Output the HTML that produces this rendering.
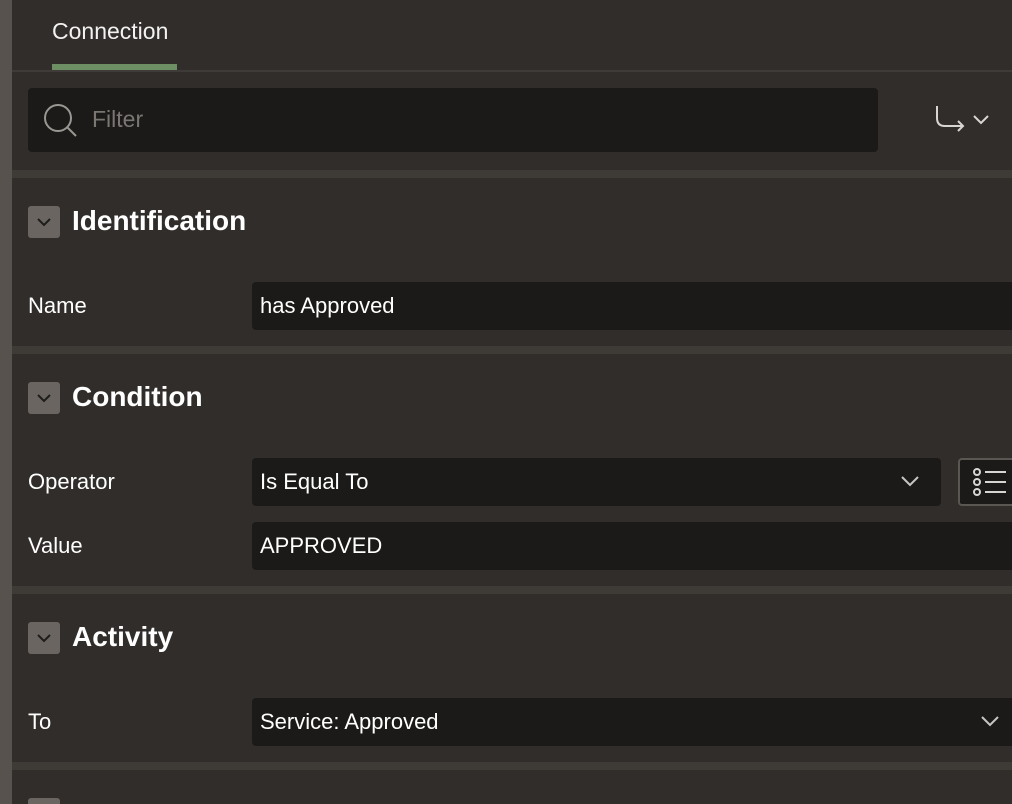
<!DOCTYPE html>
<html style="overflow:hidden;width:1012px;height:804px"><head><style>
*{margin:0;padding:0;box-sizing:border-box}
body{width:1012px;height:804px;overflow:hidden;background:#312d2a;font-family:"Liberation Sans",sans-serif;color:#fff;position:relative}
.a{position:absolute}
.strip{left:0;top:0;width:12px;height:804px;background:#57524d}
.sep{left:12px;width:1000px;height:8px;background:#3e3a36}
.tog{left:28px;width:32px;height:32px;background:#6a6560;border-radius:3px}
.tog svg{position:absolute;left:8px;top:10px}
.h{left:72px;font-size:28px;font-weight:bold}
.lbl{left:28px;font-size:22px}
.inp{background:#1b1a18;border-radius:4px;font-size:22px;padding-left:8px;line-height:48px;height:48px}
</style></head><body>
<div class="a strip"></div>
<div class="a" style="left:52px;top:18px;font-size:23px;color:#f2f2f2">Connection</div>
<div class="a" style="left:52px;top:64px;width:125px;height:6px;background:#6e8e63"></div>
<div class="a" style="left:12px;top:70px;width:1000px;height:2px;background:#3f3b38"></div>
<div class="a" style="left:28px;top:88px;width:850px;height:64px;background:#1b1a18;border-radius:4px"></div>
<svg class="a" style="left:42px;top:102px" width="36" height="36" viewBox="0 0 36 36" fill="none" stroke="#9a9793" stroke-width="2"><circle cx="16" cy="16" r="13"/><line x1="25" y1="25" x2="34" y2="34"/></svg>
<div class="a" style="left:92px;top:106px;font-size:23px;color:#7a7672">Filter</div>
<svg class="a" style="left:932px;top:104px" width="64" height="34" viewBox="0 0 64 34" fill="none" stroke="#d8d6d3" stroke-width="2"><path d="M5 2 V14 Q5 22 13 22 H31 M26 17 L31 22 L26 27"/><path d="M42 12 L49 19 L56 12"/></svg>
<div class="a sep" style="top:170px"></div>
<div class="a tog" style="top:206px"><svg width="16" height="12"><path d="M2 3 L8 9 L14 3" stroke="#1f1d1b" stroke-width="2" fill="none"/></svg></div>
<div class="a h" style="top:205px">Identification</div>
<div class="a lbl" style="top:293px">Name</div>
<div class="a inp" style="left:252px;top:282px;width:770px">has Approved</div>
<div class="a sep" style="top:346px"></div>
<div class="a tog" style="top:382px"><svg width="16" height="12"><path d="M2 3 L8 9 L14 3" stroke="#1f1d1b" stroke-width="2" fill="none"/></svg></div>
<div class="a h" style="top:381px">Condition</div>
<div class="a lbl" style="top:469px">Operator</div>
<div class="a inp" style="left:252px;top:458px;width:689px">Is Equal To</div>
<svg class="a" style="left:900px;top:474px" width="20" height="14"><path d="M2 3 L10 11 L18 3" stroke="#c8c6c3" stroke-width="2" fill="none"/></svg>
<div class="a" style="left:958px;top:458px;width:70px;height:48px;background:#1b1a18;border:2px solid #5a5651;border-radius:4px"></div>
<svg class="a" style="left:972px;top:467px" width="40" height="30" fill="none" stroke="#d8d6d3" stroke-width="2"><circle cx="5" cy="5" r="3"/><circle cx="5" cy="15" r="3"/><circle cx="5" cy="25" r="3"/><path d="M13 5H34M13 15H34M13 25H34"/></svg>
<div class="a lbl" style="top:533px">Value</div>
<div class="a inp" style="left:252px;top:522px;width:770px">APPROVED</div>
<div class="a sep" style="top:586px"></div>
<div class="a tog" style="top:622px"><svg width="16" height="12"><path d="M2 3 L8 9 L14 3" stroke="#1f1d1b" stroke-width="2" fill="none"/></svg></div>
<div class="a h" style="top:621px">Activity</div>
<div class="a lbl" style="top:709px">To</div>
<div class="a inp" style="left:252px;top:698px;width:770px">Service: Approved</div>
<svg class="a" style="left:980px;top:714px" width="20" height="14"><path d="M2 3 L10 11 L18 3" stroke="#c8c6c3" stroke-width="2" fill="none"/></svg>
<div class="a sep" style="top:762px"></div>
<div class="a tog" style="top:798px;height:6px;border-radius:3px 3px 0 0"></div>
</body></html>
